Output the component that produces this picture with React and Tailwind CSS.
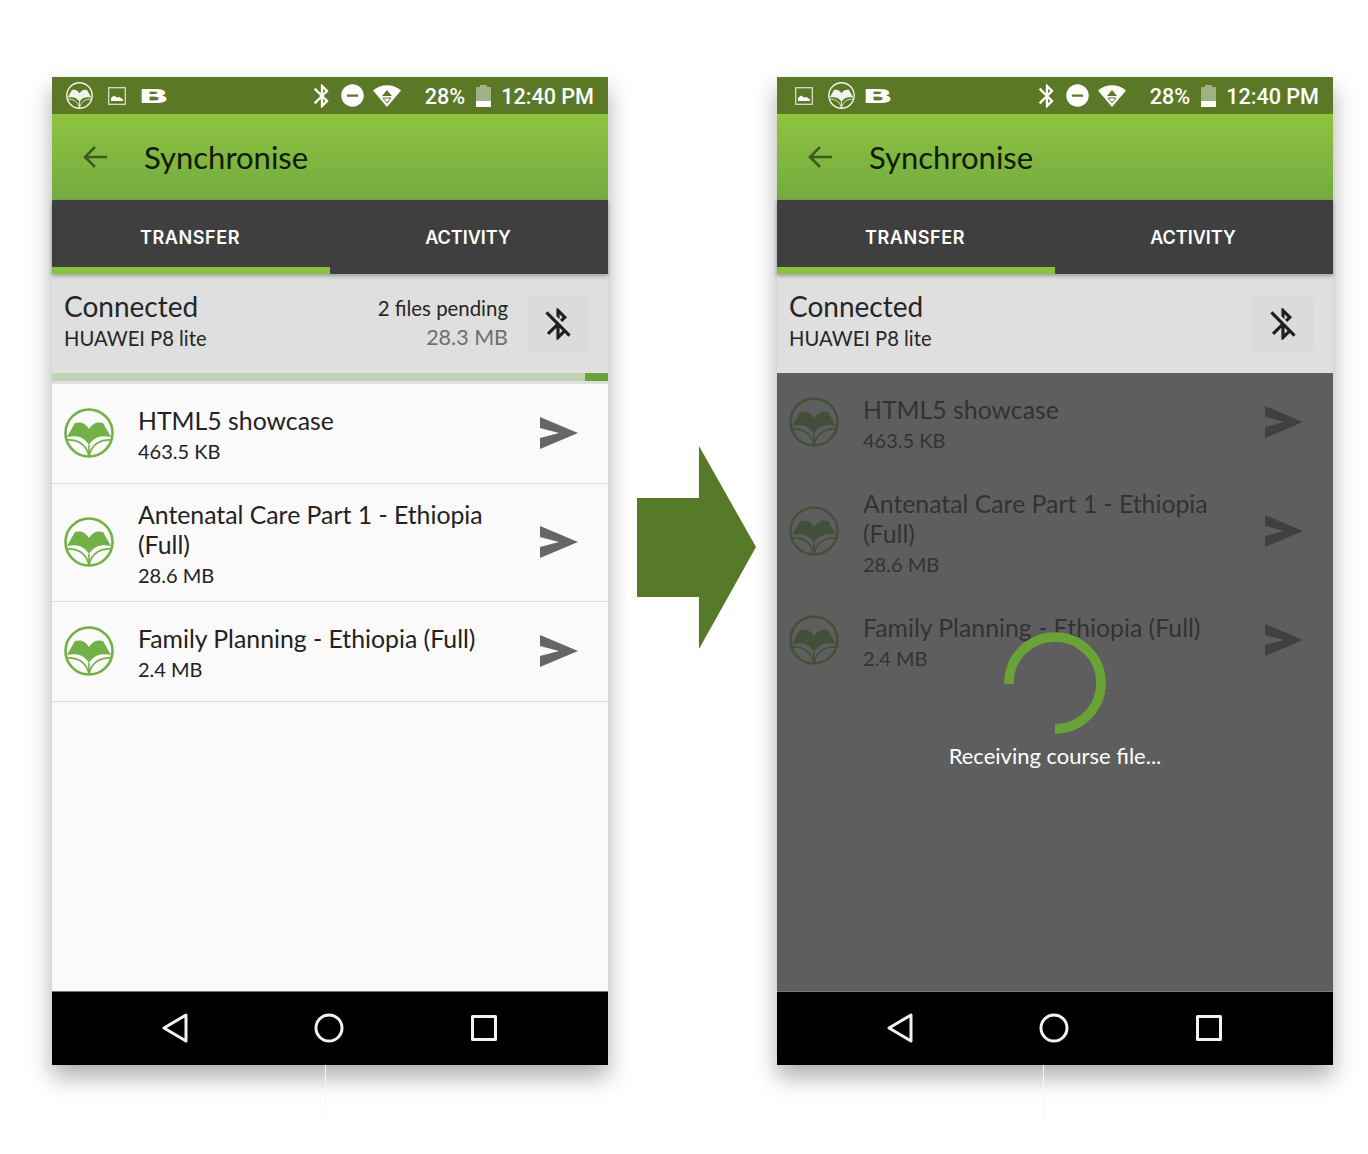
const COURSES = [
  { title: ["HTML5 showcase"], size: "463.5 KB", height: "h-[100px]" },
  {
    title: ["Antenatal Care Part 1 - Ethiopia", "(Full)"],
    size: "28.6 MB",
    height: "h-[118px]",
  },
  { title: ["Family Planning - Ethiopia (Full)"], size: "2.4 MB", height: "h-[100px]" },
];

const BT =
  "M17.71 7.71L12 2h-1v7.59L6.41 5 5 6.41 10.59 12 5 17.59 6.41 19 11 14.41V22h1l5.71-5.71-4.3-4.29 4.3-4.29zM13 5.83l1.88 1.88L13 9.59V5.83zm1.88 10.46L13 18.17v-3.76l1.88 1.88z";
const BT_OFF =
  "M13 5.83l1.88 1.88-1.6 1.6 1.41 1.41 3.02-3.02L12 2h-1v5.03l2 2v-3.2zM5.41 4L4 5.41 10.59 12 5 17.59 6.41 19 11 14.41V22h1l4.29-4.29 2.3 2.3L20 18.59 5.41 4zM13 18.17v-3.76l1.88 1.88L13 18.17z";

function BookLogo({ className, color }) {
  return (
    <svg viewBox="0 0 50 50" className={className} fill="none">
      <circle cx="25" cy="25" r="23.5" stroke={color} strokeWidth="2.6" />
      <path
        d="M11 15C16 13.5 21 14.5 25 21C29 14.5 34 13.5 39 15L47 29C38 27 30 28.5 25 37C20 28.5 12 27 3 29Z"
        fill={color}
      />
      <path
        d="M3 32C12 31 22 35 25 48C28 35 38 31 47 32M25 37V48"
        stroke={color}
        strokeWidth="1.6"
      />
    </svg>
  );
}

function SendIcon({ className }) {
  return (
    <svg viewBox="0 0 38 32" className={className}>
      <polygon points="0,0 38,16 0,32 0,21 19,16 0,11" fill="currentColor" />
    </svg>
  );
}

function ImageIcon() {
  return (
    <svg viewBox="0 0 18 18" className="w-[18px] h-[18px] shrink-0">
      <rect x="0.7" y="0.7" width="16.6" height="16.6" fill="none" stroke="#dfe6d2" strokeWidth="1.2" />
      <path d="M3 14V11L6 8.5L9 10.5L11.5 10L15 12.5V14Z" fill="#fff" />
    </svg>
  );
}

function StatusBar({ imageFirst }) {
  const logo = <BookLogo className="w-[27px] h-[27px] shrink-0" color="#f1f4ea" />;
  const image = <ImageIcon />;
  return (
    <div className="h-[37px] bg-[#5b7827] flex items-center text-white pl-[14px] pr-[14px]">
      {imageFirst ? (
        <div className="flex items-center ml-[4px]">
          {image}
          <div className="ml-[15px]">{logo}</div>
        </div>
      ) : (
        <div className="flex items-center">
          {logo}
          <div className="ml-[15px]">{image}</div>
        </div>
      )}
      <span
        className={`${imageFirst ? "ml-[9px]" : "ml-[14px]"} w-[27px] pt-[1px] text-[19px] leading-none scale-x-[2.15] text-center`}
        style={{ fontFamily: "'DejaVu Sans', sans-serif", fontWeight: 700 }}
      >
        B
      </span>
      <div className="flex-1" />
      <svg viewBox="0 0 24 24" className="w-[28px] h-[28px] fill-white">
        <path d={BT} />
      </svg>
      <svg viewBox="0 0 24 24" className="w-[27px] h-[27px] fill-white ml-[3px]">
        <path d="M12 2C6.48 2 2 6.48 2 12s4.48 10 10 10 10-4.48 10-10S17.52 2 12 2zm5 11H7v-2h10v2z" />
      </svg>
      <svg viewBox="0 0 28 22" className="w-[28px] h-[22px] ml-[7px]">
        <path d="M0 5.5C8 -1.5 20 -1.5 28 5.5L14 22Z" fill="#fff" />
        <path d="M14 5L19 11H9Z" fill="#5b7827" />
        <path d="M10 13H18L14 18Z" fill="none" stroke="#5b7827" strokeWidth="1" />
      </svg>
      <span className="ml-[24px] pt-[2px] font-['Roboto',sans-serif] font-medium text-[21.6px] leading-none">28%</span>
      <div className="ml-[11px] w-[15px] h-[22px] flex flex-col">
        <div className="mx-auto w-[7px] h-[2px] bg-[#a0b184]" />
        <div className="flex-1 bg-[#a0b184]" />
        <div className="h-[6px] bg-white" />
      </div>
      <span className="ml-[10px] pt-[2px] font-['Roboto',sans-serif] font-medium text-[21.6px] leading-none">12:40 PM</span>
    </div>
  );
}

function Toolbar() {
  return (
    <div className="h-[86px] bg-gradient-to-b from-[#8ec43f] to-[#74aa40] flex items-center pl-[30px] font-['Lato',sans-serif]">
      <svg viewBox="0 0 26 24" className="w-[26px] h-[24px]" fill="none" stroke="#3f5a1e" strokeWidth="2.6">
        <path d="M25 12H3M13 2L3 12L13 22" />
      </svg>
      <span className="ml-[36px] text-[31px] leading-none text-[#101a08]">Synchronise</span>
    </div>
  );
}

function Tabs() {
  return (
    <div className="h-[74px] bg-[#3f3f3f] relative flex font-['Inter',sans-serif] font-semibold text-[18px] text-white shadow-[0_2px_4px_rgba(0,0,0,0.3)]">
      <div className="flex-1 flex flex-col">
        <div className="flex-1 flex items-center justify-center pt-[7px] pr-[2px] tracking-[0.6px]">TRANSFER</div>
        <div className="h-[7px] bg-[#8cc13f]" />
      </div>
      <div className="flex-1 flex flex-col">
        <div className="flex-1 flex items-center justify-center pt-[7px] pr-[2px]">ACTIVITY</div>
        <div className="h-[7px]" />
      </div>
    </div>
  );
}

function ConnectionPanel({ pending }) {
  return (
    <div className="h-[99px] bg-[#dfdfdf] flex items-center pl-[12px] pr-[19px] font-['Lato',sans-serif]">
      <div className="flex-1 pb-[8px]">
        <div className="text-[28px] leading-[36px] text-[#262626]">Connected</div>
        <div className="text-[20.2px] leading-[28px] text-[#262626]">HUAWEI P8 lite</div>
      </div>
      {pending && (
        <div className="text-right mr-[19px] pb-[2px]">
          <div className="text-[20.4px] leading-[28px] text-[#262626]">2 files pending</div>
          <div className="text-[21.5px] leading-[30px] text-[#6f6f6f]">28.3 MB</div>
        </div>
      )}
      <div className="w-[62px] h-[56px] rounded-[3px] bg-[#dadcda] flex items-center justify-center">
        <svg viewBox="0 0 24 24" className="w-[38px] h-[38px] fill-[#1f1f1f]">
          <path d={BT_OFF} />
        </svg>
      </div>
    </div>
  );
}

function CourseRow({ course }) {
  return (
    <div className={`${course.height} border-b border-[#dcdcdc] flex items-center pl-[12px] font-['Lato',sans-serif]`}>
      <BookLogo className="w-[50px] h-[50px] shrink-0 mt-[-1px]" color="#73b045" />
      <div className="ml-[24px] flex-1 text-[#222222] pt-[4px]">
        {course.title.map((line) => (
          <div key={line} className="text-[24.8px] leading-[30px]">
            {line}
          </div>
        ))}
        <div className="text-[20px] leading-[30px]">{course.size}</div>
      </div>
      <SendIcon className="w-[38px] h-[32px] mr-[30px] mt-[-1px] text-[#666666]" />
    </div>
  );
}

function NavBar() {
  return (
    <div className="h-[74px] bg-black flex items-center justify-center border-t border-[#777777] pb-[2px] pr-[2px]">
      <svg viewBox="0 0 26 30" className="w-[26px] h-[30px]" fill="none" stroke="#f2f2f2" strokeWidth="3" strokeLinejoin="round">
        <path d="M24 2V28L2 15Z" />
      </svg>
      <svg viewBox="0 0 30 30" className="w-[30px] h-[30px] ml-[126px]" fill="none" stroke="#f2f2f2" strokeWidth="3">
        <circle cx="15" cy="15" r="13" />
      </svg>
      <svg viewBox="0 0 26 26" className="w-[26px] h-[26px] ml-[127px]" fill="none" stroke="#f2f2f2" strokeWidth="3" strokeLinejoin="round">
        <rect x="1.5" y="1.5" width="23" height="23" />
      </svg>
    </div>
  );
}

function Phone({ receiving }) {
  return (
    <div className="w-[556px] shrink-0 flex flex-col">
      <div className="h-[988px] flex flex-col shadow-[0_12px_22px_rgba(0,0,0,0.32)]">
        <StatusBar imageFirst={receiving} />
        <Toolbar />
        <Tabs />
        <ConnectionPanel pending={!receiving} />
        {!receiving && (
          <div className="h-[11px] bg-[#dfdfdf] flex flex-col">
            <div className="h-[8px] bg-[#c2d3b5] flex justify-end">
              <div className="w-[23px] bg-[#69a338]" />
            </div>
          </div>
        )}
        <div className="flex-1 bg-[#fafafa] relative overflow-hidden">
          {COURSES.map((course) => (
            <CourseRow key={course.size} course={course} />
          ))}
          {receiving && (
            <div className="absolute inset-0 bg-[#373737]/[0.8] flex flex-col items-center pt-[259px]">
              <svg viewBox="0 0 102 102" className="w-[102px] h-[102px]" fill="none">
                <path
                  d="M51 97A46 46 0 1 0 5 52"
                  stroke="#69a338"
                  strokeWidth="9.5"
                />
              </svg>
              <div className="mt-[7px] text-[22px] leading-[30px] text-white font-['Lato',sans-serif]">
                Receiving course file...
              </div>
            </div>
          )}
        </div>
        <NavBar />
      </div>
      <div className={`w-px h-[55px] bg-[#f6f6f6] ${receiving ? "ml-[266px]" : "ml-[273px]"}`} />
    </div>
  );
}

export default function App() {
  return (
    <div className="w-[1368px] h-[1154px] bg-white overflow-hidden flex items-start pl-[52px] pt-[77px]">
      <Phone />
      <div className="w-[169px] shrink-0 flex pl-[29px] pt-[369px]">
        <svg viewBox="0 0 119 203" className="w-[119px] h-[203px]">
          <polygon points="0,52 62,52 62,0 119,101 62,203 62,151 0,151" fill="#567a28" />
        </svg>
      </div>
      <Phone receiving />
    </div>
  );
}
